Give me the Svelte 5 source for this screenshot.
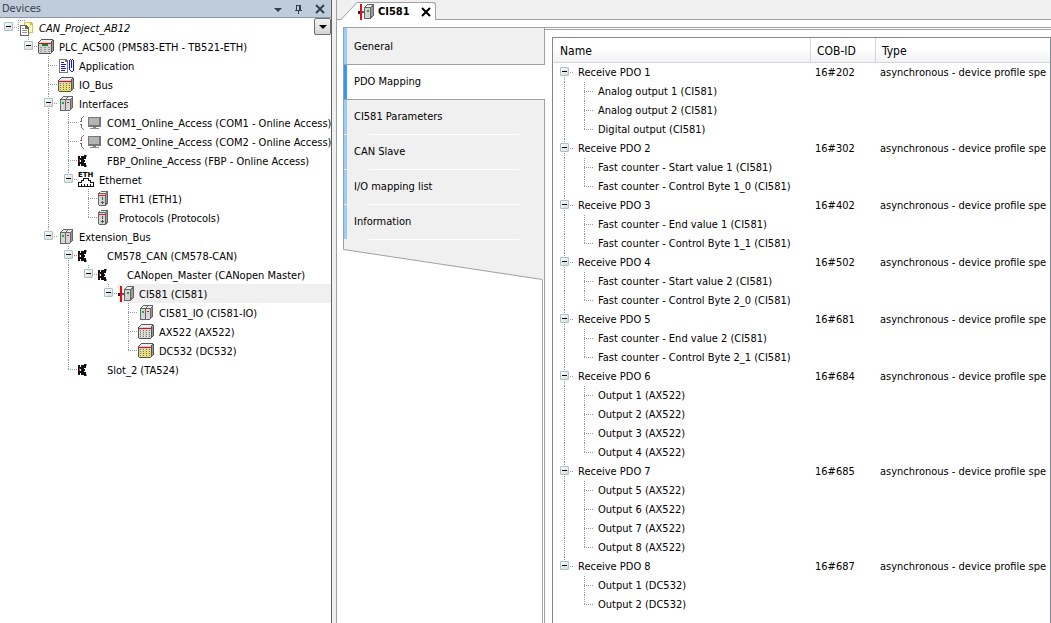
<script>
  const devices = [
    {
      name: "CAN_Project_AB12",
      icon: "project",
      italic: true,
      children: [
        {
          name: "PLC_AC500 (PM583-ETH - TB521-ETH)",
          icon: "plc",
          children: [
            { name: "Application", icon: "app" },
            { name: "IO_Bus", icon: "io" },
            {
              name: "Interfaces",
              icon: "slots",
              children: [
                { name: "COM1_Online_Access (COM1 - Online Access)", icon: "com" },
                { name: "COM2_Online_Access (COM2 - Online Access)", icon: "com" },
                { name: "FBP_Online_Access (FBP - Online Access)", icon: "plug" },
                {
                  name: "Ethernet",
                  icon: "eth",
                  children: [
                    { name: "ETH1 (ETH1)", icon: "port" },
                    { name: "Protocols (Protocols)", icon: "port" },
                  ],
                },
              ],
            },
            {
              name: "Extension_Bus",
              icon: "slots",
              children: [
                {
                  name: "CM578_CAN (CM578-CAN)",
                  icon: "plug",
                  children: [
                    {
                      name: "CANopen_Master (CANopen Master)",
                      icon: "plug",
                      children: [
                        {
                          name: "CI581 (CI581)",
                          icon: "slave",
                          selected: true,
                          children: [
                            { name: "CI581_IO (CI581-IO)", icon: "slots" },
                            { name: "AX522 (AX522)", icon: "analog" },
                            { name: "DC532 (DC532)", icon: "io" },
                          ],
                        },
                      ],
                    },
                  ],
                },
                { name: "Slot_2 (TA524)", icon: "plug" },
              ],
            },
          ],
        },
      ],
    },
  ];

  const pdo = (n, id, items) => ({
    name: "Receive PDO " + n,
    id,
    children: items.map((name) => ({ name })),
  });

  const pdos = [
    pdo(1, "16#202", ["Analog output 1 (CI581)", "Analog output 2 (CI581)", "Digital output (CI581)"]),
    pdo(2, "16#302", ["Fast counter - Start value 1 (CI581)", "Fast counter - Control Byte 1_0 (CI581)"]),
    pdo(3, "16#402", ["Fast counter - End value 1 (CI581)", "Fast counter - Control Byte 1_1 (CI581)"]),
    pdo(4, "16#502", ["Fast counter - Start value 2 (CI581)", "Fast counter - Control Byte 2_0 (CI581)"]),
    pdo(5, "16#681", ["Fast counter - End value 2 (CI581)", "Fast counter - Control Byte 2_1 (CI581)"]),
    pdo(6, "16#684", ["Output 1 (AX522)", "Output 2 (AX522)", "Output 3 (AX522)", "Output 4 (AX522)"]),
    pdo(7, "16#685", ["Output 5 (AX522)", "Output 6 (AX522)", "Output 7 (AX522)", "Output 8 (AX522)"]),
    pdo(8, "16#687", ["Output 1 (DC532)", "Output 2 (DC532)"]),
  ];

  const pages = ["General", "PDO Mapping", "CI581 Parameters", "CAN Slave", "I/O mapping list", "Information"];
  let page = $state("PDO Mapping");

  // one entry per visible row, "guides" says for each level if its line goes on
  function flatten(nodes, guides = [], closed = []) {
    let rows = [];
    nodes.forEach((node, i) => {
      const more = i < nodes.length - 1;
      const first = guides.length == 0 && i == 0;
      rows.push({ node, guides, more, first });
      if (node.children && !closed.includes(node)) {
        rows = rows.concat(flatten(node.children, [...guides, more], closed));
      }
    });
    return rows;
  }

  let closed = $state.raw([]);
  let deviceRows = $derived(flatten(devices, [], closed));
  let pdoRows = $derived(flatten(pdos, [], closed));

  function toggle(node) {
    closed = closed.includes(node) ? closed.filter((n) => n != node) : [...closed, node];
  }
</script>

{#snippet branch(row)}
  {#each row.guides as on}
    <span class="guide" class:on></span>
  {/each}
  <span class="joint">
    {#if !row.first}<i class="up"></i>{/if}
    {#if row.more}<i class="down"></i>{/if}
    <i class="across"></i>
    {#if row.node.children}
      <button class="toggle" aria-label="Toggle {row.node.name}" onclick={() => toggle(row.node)}></button>
    {/if}
  </span>
{/snippet}

{#snippet icon(name)}
  {#if name == "com"}
    <svg class="icon" width="24" height="16" viewBox="0 0 24 16" shape-rendering="crispEdges">
      <path d="M5 1h1v1h-1zM4 2h1v1h-1zM3 3h1v3h-1zM2 6h1v1h-1zM2 9h1v1h-1zM3 10h1v3h-1zM4 13h1v1h-1zM5 14h1v1h-1z" fill="#777" />
      <path d="M3 6h1v1h-1zM3 9h1v1h-1z" fill="#d33" />
      <path d="M10 2h13v10h-13z" fill="#777" />
      <path d="M11 3h10v7h-10z" fill="#b4b4b4" />
      <path d="M15 12h3v1h-3zM12 13h9v1h-9z" fill="#888" />
    </svg>
  {:else}
    <svg class="icon" width="16" height="16" viewBox="0 0 16 16" shape-rendering="crispEdges">
      {#if name == "project"}
        <path d="M0 0h1v1h-1zM2 0h1v1h-1zM4 0h1v1h-1zM6 0h1v1h-1zM0 2h1v1h-1zM0 4h1v1h-1zM0 6h1v1h-1zM0 8h1v1h-1zM0 10h1v1h-1z" fill="#888" />
        <path d="M6 2h7l2 2v9h-9z" fill="#cfc24a" />
        <path d="M7 3h5v2h2v7h-7z" fill="#fffbb0" />
        <path d="M2 5h6l3 3v8h-9z" fill="#666" />
        <path d="M3 6h4v3h3v6h-7z" fill="#fff" />
        <path d="M4 8h2v1h-2zM4 10h5v1h-5zM4 12h5v1h-5z" fill="#999" />
      {:else if name == "plc" || name == "io" || name == "analog"}
        <path d="M3 0h12v1h1v11h-1v1h-1v1h-1v1h-12v-1h-1v-11h1v-1h1v-1h1z" fill="#555" />
        <path d="M3 1h11v1h-1v1h-11v-1h1z" fill="#eee" />
        <path d="M1 3h12v11h-12z" fill="#d2d2d2" />
        <path d="M14 2h1v10h-1z" fill="#999" />
        <path d="M1 4h12v1h-12z" fill="#e01010" />
        {#if name == "plc"}
          <path d="M4 5h6v2h-6z" fill="#16852b" />
          <path d="M2 8h2v1h-2zM6 8h2v1h-2zM10 8h2v1h-2zM2 10h2v1h-2zM6 10h2v1h-2zM10 10h2v1h-2zM2 12h2v1h-2zM6 12h2v1h-2zM10 12h2v1h-2z" fill="#999" />
        {:else}
          {#each [2, 5, 8, 11] as x}
            {#each [6, 8, 10, 12] as y}
              <rect {x} {y} width="2" height={name == "io" ? 2 : 1} fill={name == "io" ? "#f7e634" : "#f3eeb4"} />
              <rect {x} {y} width="1" height="1" fill="#777" />
            {/each}
          {/each}
        {/if}
      {:else if name == "app"}
        <path d="M1 1h7l2 2v12h-9z" fill="#777" />
        <path d="M2 2h5v2h2v10h-7z" fill="#fff" />
        <path d="M3 4h3v1h-3zM3 6h5v1h-5zM3 8h4v1h-4zM3 10h5v1h-5zM3 12h4v1h-4z" fill="#1414e0" />
        <path d="M12 1h1v1h-1zM11 2h1v10h-1zM13 2h1v8h-1zM15 2h1v11h-1zM14 1h1v1h-1zM12 12h1v1h-1zM13 13h2v1h-2z" fill="#1414e0" />
      {:else if name == "slots"}
        <path d="M5 0h10v12h-1v1h-1v1h-1v1h-10v-12h1v-1h1v-1h1z" fill="#666" />
        <path d="M3 4h4v10h-4zM8 4h4v10h-4z" fill="#d6d6d6" />
        <path d="M5 1h4v1h-1v1h-4v-1h1zM10 1h4v1h-1v1h-4v-1h1z" fill="#eee" />
        <path d="M13 3h1v9h-1z" fill="#999" />
        <path d="M4 6h2v2h-2z" fill="#18b428" />
        <path d="M9 6h2v1h-2z" fill="#d01818" />
      {:else if name == "plug"}
        <path d="M0 3h2v3h-2zM0 9h2v4h-2zM0 6h1v3h-1zM2 5h1v2h-1zM2 9h1v2h-1zM3 3h3v10h-3zM6 2h2v4h-2zM6 7h1v2h-1zM6 10h2v4h-2z" fill="#111" />
        <path d="M8 2h1v2h-1zM8 12h1v2h-1z" fill="#888" />
        <path d="M1 6h1v3h-1z" fill="#c02020" />
      {:else if name == "eth"}
        <text x="0" y="5">ETH</text>
        <path d="M0.500 14.500v-4h3v-2h2v-2h5v2h2v2h3v4z" fill="#fff" stroke="#111" />
        <path d="M3.500 12v3M6.500 12v3M9.500 12v3M12.500 12v3" stroke="#111" />
      {:else if name == "port"}
        <path d="M3 0h7v13h-1v1h-1v1h-7v-1h-1v-12h1v-1h2z" fill="#666" />
        <path d="M3 1h5v1h-6v-1z" fill="#eee" />
        <path d="M1 3h6v11h-6z" fill="#d2d2d2" />
        <path d="M8 2h1v10h-1z" fill="#999" />
        <path d="M1 4h6v1h-6z" fill="#d22" />
        <path d="M4 6h1v3h-1zM3 11h3v1h-3zM4 10h1v3h-1z" fill="#555" />
      {:else if name == "slave"}
        <path d="M2 0h2v16h-2z" fill="#e01010" />
        <path d="M0 7h2v3h-2z" fill="#222" />
        <path d="M4 7h3v2h-3z" fill="#c018a8" />
        <path d="M9 0h7v12h-1v1h-1v1h-1v1h-7v-12h1v-1h1v-1h1z" fill="#666" />
        <path d="M7 4h5v10h-5z" fill="#d2d2d2" />
        <path d="M9 1h5v1h-1v1h-5v-1h1z" fill="#eee" />
        <path d="M13 3h2v9h-2z" fill="#999" />
        <path d="M9 6h2v2h-2z" fill="#18b428" />
      {/if}
    </svg>
  {/if}
{/snippet}

<div class="ide">
  <aside class="devices">
    <header>
      <h2>Devices</h2>
      <button aria-label="Window position">
        <svg width="10" height="10" viewBox="0 0 10 10"><path d="M1 4h8l-4 4z" fill="#34404c" /></svg>
      </button>
      <button aria-label="Auto hide">
        <svg width="10" height="10" viewBox="0 0 10 10" shape-rendering="crispEdges">
          <path d="M2 1h5v1h-5zM2 2h1v4h-1zM5 2h2v4h-2zM1 6h7v1h-7zM4 7h1v3h-1z" fill="#34404c" />
        </svg>
      </button>
      <button aria-label="Close devices">
        <svg width="10" height="10" viewBox="0 0 10 10"><path d="M1 1l8 8M9 1l-8 8" stroke="#34404c" stroke-width="2" /></svg>
      </button>
    </header>

    <div class="tree">
      <button class="menu" aria-label="Project menu">
        <svg width="8" height="4" viewBox="0 0 8 4"><path d="M0 0h8l-4 4z" fill="#000" /></svg>
      </button>
      {#each deviceRows as row}
        <div class="row">
          {@render branch(row)}
          <span class="label" class:selected={row.node.selected}>
            <span class="pic" class:wide={["com", "plug"].includes(row.node.icon)}>
              {@render icon(row.node.icon)}
            </span>
            <span class="name" class:italic={row.node.italic}>{row.node.name}</span>
          </span>
        </div>
      {/each}
    </div>
  </aside>

  <main>
    <div class="tabs">
      <svg class="slope" width="17" height="18" viewBox="0 0 17 18">
        <path d="M0 18l14-15q2-2 3-2v17z" fill="#fff" />
        <path d="M0 17.500l14-15q1-2 3-2" fill="none" stroke="#a0a0a0" />
      </svg>
      <div class="tab">
        {@render icon("slave")}
        <span>CI581</span>
        <button aria-label="Close CI581">
          <svg width="10" height="10" viewBox="0 0 10 10"><path d="M1 1l8 8M9 1l-8 8" stroke="#000" stroke-width="2" /></svg>
        </button>
      </div>
    </div>

    <div class="editor">
      <nav>
        <div class="pages">
          {#each pages as title}
            <button class:active={title == page} onclick={() => (page = title)}>{title}</button>
          {/each}
        </div>
        <svg width="202" height="40" viewBox="0 0 202 40">
          <path d="M0.500 0v9.500l199 30v0.500h2v-40z" fill="#f0f0f0" />
          <path d="M0.500 0v9.500l199 30" fill="none" stroke="#a0a0a0" />
          <path d="M201.500 0v40" stroke="#a0a0a0" />
        </svg>
        <div class="tail"></div>
      </nav>

      <section>
        <div class="frame">
          <table>
            <colgroup>
              <col class="c-name" />
              <col class="c-id" />
              <col />
            </colgroup>
            <thead>
              <tr><th>Name</th><th>COB-ID</th><th>Type</th></tr>
            </thead>
            <tbody>
              {#each pdoRows as row}
                <tr>
                  <td class="first">
                    <div class="row">
                      {@render branch(row)}
                      <span class="name">{row.node.name}</span>
                    </div>
                  </td>
                  <td>{row.node.id ?? ""}</td>
                  <td>{row.node.id ? "asynchronous - device profile spe" : ""}</td>
                </tr>
              {/each}
            </tbody>
          </table>
        </div>
      </section>
    </div>
  </main>
</div>

<style>
  :global(body) {
    background: #fff;
    font-family: Tahoma, "DejaVu Sans Condensed", "Noto Sans", sans-serif;
    font-size: 11px;
    color: #000;
  }
  button {
    border: 0;
    padding: 0;
    background: none;
    font: inherit;
    color: inherit;
  }
  svg {
    display: block;
    flex: none;
  }
  .ide {
    display: flex;
    min-height: 100vh;
    background: #f0f0f0;
  }

  /* device tree */
  .devices {
    flex: none;
    width: 331px;
    border-right: 1px solid #646464;
    background: #fff;
  }
  .devices header {
    display: flex;
    align-items: center;
    gap: 11px;
    height: 17px;
    padding: 0 6px 0 2px;
    border-bottom: 1px solid #8c98a4;
    background: #bfcddb;
  }
  h2 {
    flex: 1;
    margin: 0;
    font-size: 11px;
    font-weight: normal;
    color: #34404c;
  }
  .tree {
    position: relative;
  }
  .menu {
    position: absolute;
    top: 0;
    right: 0;
    display: flex;
    align-items: center;
    justify-content: center;
    width: 17px;
    height: 17px;
    border: 1px solid #707070;
    border-radius: 2px;
    background: linear-gradient(#f4f4f4, #d4d4d4);
  }
  .row {
    display: flex;
    height: 19px;
    line-height: 19px;
    white-space: nowrap;
  }
  .guide,
  .joint {
    position: relative;
    flex: none;
    width: 20px;
  }
  .joint {
    width: 18px;
  }
  .guide.on::before,
  .joint i {
    content: "";
    position: absolute;
    left: 8px;
    top: 0;
    width: 1px;
    height: 19px;
    background: repeating-linear-gradient(#999 0 1px, transparent 1px 2px);
  }
  .joint .up {
    height: 10px;
  }
  .joint .down {
    top: 10px;
    height: 9px;
  }
  .joint .across {
    top: 9px;
    width: 10px;
    height: 1px;
    background: repeating-linear-gradient(90deg, #999 0 1px, transparent 1px 2px);
  }
  .toggle {
    position: absolute;
    left: 4px;
    top: 4px;
    width: 9px;
    height: 9px;
    border: 1px solid #a4c4c8;
    border-radius: 1px;
    background:
      linear-gradient(#000, #000) center / 5px 1px no-repeat,
      linear-gradient(135deg, #fff, #d8d8d8);
  }
  .label {
    display: flex;
    flex: 1;
    align-items: center;
  }
  .label.selected {
    background: #f0f0f0;
  }
  .pic {
    width: 16px;
    padding-top: 1px;
  }
  .pic.wide {
    width: 24px;
  }
  .label .name {
    padding: 2px 0 0 5px;
  }
  .italic {
    font-style: italic;
  }
  .icon text {
    font: bold 7px "DejaVu Sans", sans-serif;
  }

  /* editor */
  main {
    display: flex;
    flex: 1;
    flex-direction: column;
    min-width: 0;
    margin-left: 4px;
    border-left: 1px solid #a0a0a0;
    background: #fff;
  }
  .tabs {
    display: flex;
    align-items: flex-end;
    height: 20px;
    padding-left: 4px;
    background: linear-gradient(#a0a0a0, #a0a0a0) bottom / 100% 1px no-repeat #f0f0f0;
  }
  .slope {
    height: 18px;
  }
  .tab {
    display: flex;
    align-items: center;
    height: 17px;
    padding-right: 4px;
    border: 1px solid #a0a0a0;
    border-width: 1px 1px 0 0;
    border-radius: 0 3px 0 0;
    background: #fff;
    font-weight: bold;
  }
  .tab span {
    padding: 0 11px 0 4px;
  }
  .editor {
    display: flex;
    flex: 1;
    padding: 7px 0 0 6px;
  }
  nav {
    display: flex;
    flex: none;
    flex-direction: column;
    width: 202px;
  }
  .pages {
    display: flex;
    flex-direction: column;
    border: 1px solid #a0a0a0;
    border-width: 1px 0 0 1px;
  }
  .pages button {
    height: 35px;
    padding: 0 0 2px 10px;
    border: solid #a0a0a0;
    border-width: 0 1px 0 0;
    background:
      linear-gradient(#99ccff, #99ccff) left top / 3px 34px no-repeat,
      linear-gradient(#fff, #fff) 25px 100% / 150px 1px no-repeat,
      #f0f0f0;
    text-align: left;
  }
  .pages button:first-child {
    height: 37px;
    padding-bottom: 0;
    border-bottom-width: 1px;
    background:
      linear-gradient(#99ccff, #99ccff) left top / 3px 100% no-repeat,
      #f0f0f0;
  }
  .pages button.active {
    height: 34px;
    border-width: 0;
    background: linear-gradient(#3399ff, #3399ff) left top / 3px 100% no-repeat #fff;
  }
  .pages .active + button {
    height: 36px;
    border-top-width: 1px;
  }
  .tail {
    flex: 1;
    border-right: 3px double #a0a0a0;
  }
  section {
    display: flex;
    flex: 1;
    min-width: 0;
    padding: 7px 0 0 7px;
    border-top: 3px double #a0a0a0;
  }
  .frame {
    flex: 1;
    min-width: 0;
    border: 1px solid #828790;
    border-bottom: 0;
  }
  table {
    width: 100%;
    table-layout: fixed;
    border-collapse: separate;
    border-spacing: 0;
  }
  .c-name {
    width: 258px;
  }
  .c-id {
    width: 65px;
  }
  th {
    height: 25px;
    box-sizing: border-box;
    padding: 2px 6px 0;
    border: solid #d5d5d5;
    border-width: 0 1px 1px 0;
    background: linear-gradient(#fff 40%, #f1f2f4);
    font-size: 12px;
    font-weight: normal;
    text-align: left;
  }
  th:first-child {
    padding-left: 7px;
  }
  th:last-child {
    border-right: 0;
  }
  td {
    height: 19px;
    padding: 0 0 0 4px;
    overflow: hidden;
    line-height: 19px;
    white-space: nowrap;
  }
  td.first {
    padding-left: 3px;
  }
  td .name {
    padding-left: 4px;
  }
</style>
